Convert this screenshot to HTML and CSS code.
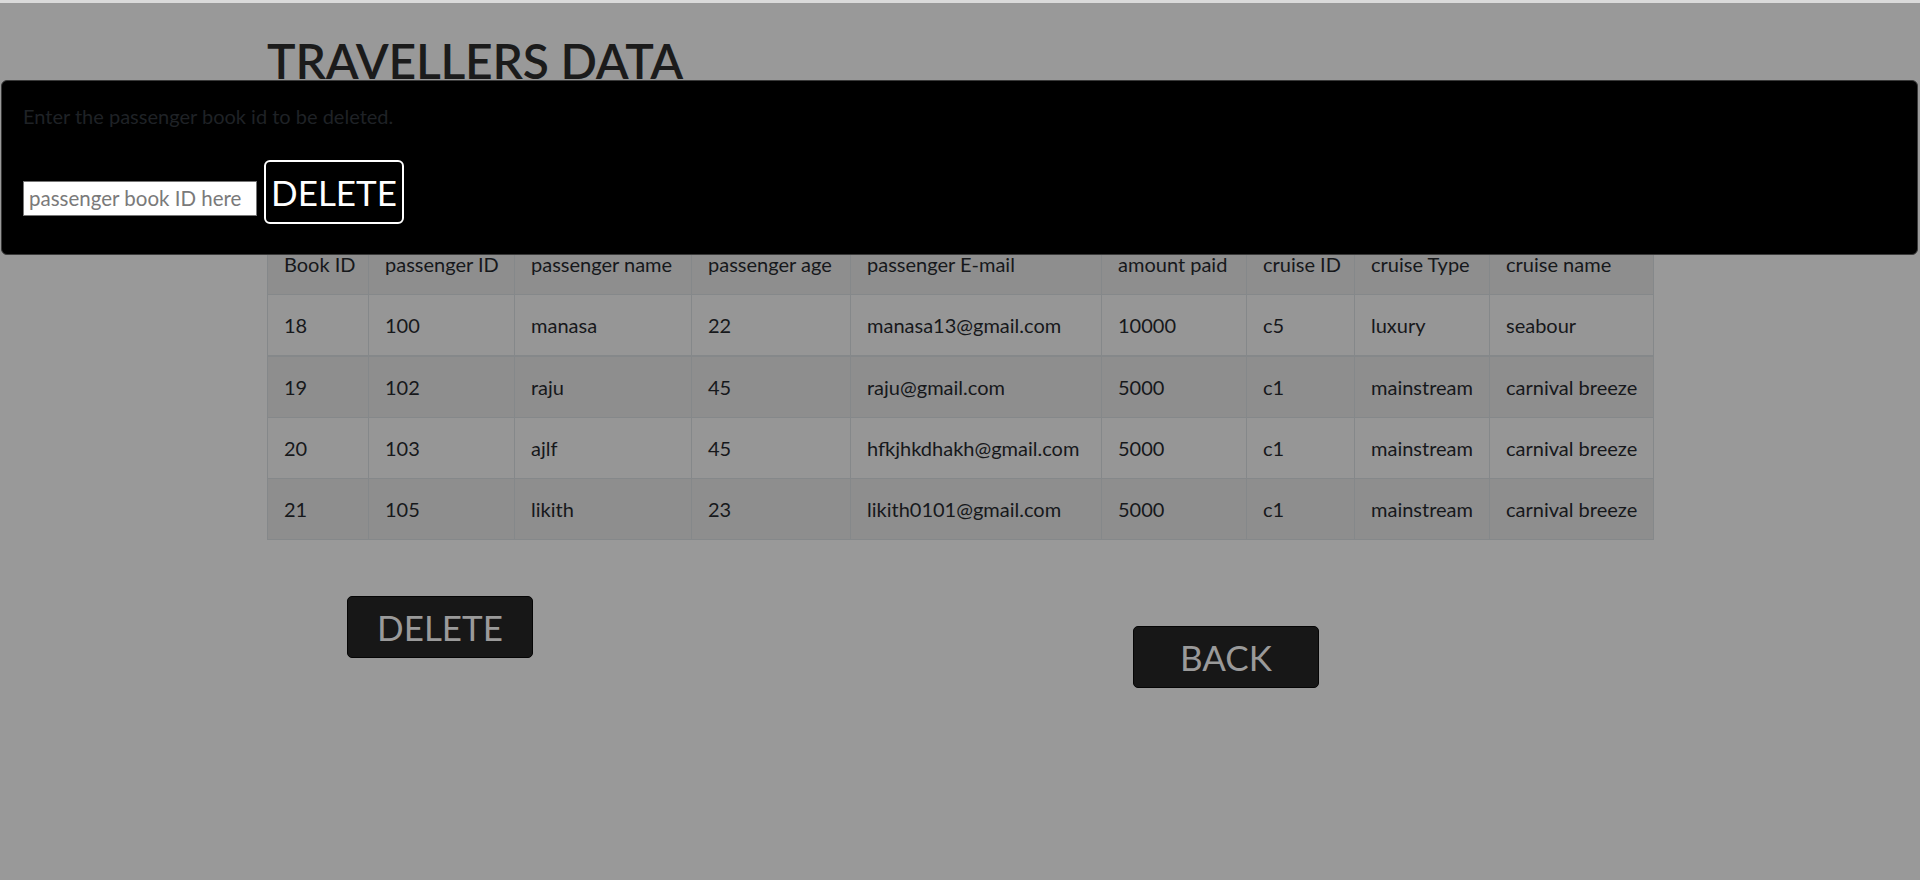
FILE: index.html
```html
<!DOCTYPE html>
<html>
<head>
<meta charset="utf-8">
<title>Travellers Data</title>
<link rel="stylesheet" href="styles.css">
</head>
<body>
<div class="topstrip"></div>
<main class="page">
  <h1 class="title">TRAVELLERS DATA</h1>
  <table class="data">
    <colgroup>
      <col class="c1"><col class="c2"><col class="c3"><col class="c4"><col class="c5"><col class="c6"><col class="c7"><col class="c8"><col class="c9">
    </colgroup>
    <tbody>
      <tr class="head"><td>Book ID</td><td>passenger ID</td><td>passenger name</td><td>passenger age</td><td>passenger E-mail</td><td>amount paid</td><td>cruise ID</td><td>cruise Type</td><td>cruise name</td></tr>
      <tr class="first"><td>18</td><td>100</td><td>manasa</td><td>22</td><td>manasa13@gmail.com</td><td>10000</td><td>c5</td><td>luxury</td><td>seabour</td></tr>
      <tr><td>19</td><td>102</td><td>raju</td><td>45</td><td>raju@gmail.com</td><td>5000</td><td>c1</td><td>mainstream</td><td>carnival breeze</td></tr>
      <tr><td>20</td><td>103</td><td>ajlf</td><td>45</td><td>hfkjhkdhakh@gmail.com</td><td>5000</td><td>c1</td><td>mainstream</td><td>carnival breeze</td></tr>
      <tr><td>21</td><td>105</td><td>likith</td><td>23</td><td>likith0101@gmail.com</td><td>5000</td><td>c1</td><td>mainstream</td><td>carnival breeze</td></tr>
    </tbody>
  </table>
  <div class="actions">
    <button class="btn-dark btn-delete">DELETE</button>
    <button class="btn-dark btn-back">BACK</button>
  </div>
</main>

<div class="modal">
  <p class="modal-text">Enter the passenger book id to be deleted.</p>
  <div class="modal-form">
    <input class="id-input" type="text" placeholder="passenger book ID here">
    <button class="btn-outline">DELETE</button>
  </div>
</div>
</body>
</html>
```
FILE: styles.css
```css
html, body {
  margin: 0;
  padding: 0;
}
body {
  background: #999999;
  font-family: Lato, "Liberation Sans", sans-serif;
  font-size: 20px;
  line-height: 1.5;
  color: #16181b;
  height: 880px;
  overflow: hidden;
}
.topstrip {
  height: 3px;
  background: #dadada;
}
.page {
  padding-left: 267px;
}
.title {
  margin: 29px 0 0 0;
  font-size: 48px;
  font-weight: 600;
  line-height: 1.2;
  color: #1b1b1b;
  letter-spacing: -0.2px;
  height: 201px;
}
.data {
  border-collapse: collapse;
  table-layout: fixed;
  width: 1386px;
  border: 1px solid #85888a;
}
.data td {
  padding: 15px 15px 15px 16px;
  border: 1px solid #85888a;
  line-height: 30px;
  white-space: nowrap;
  overflow: hidden;
}
.data tr { background: #969696; }
.data tr.head, .data tr:nth-child(3), .data tr:nth-child(5) { background: #8e8e8e; }
.data tr.first td { border-bottom-width: 2px; }
.c1 { width: 101px; }
.c2 { width: 146px; }
.c3 { width: 177px; }
.c4 { width: 159px; }
.c5 { width: 251px; }
.c6 { width: 145px; }
.c7 { width: 108px; }
.c8 { width: 135px; }
.c9 { width: 164px; }

.actions {
  display: flex;
  align-items: flex-start;
  margin-top: 56px;
}
.btn-dark {
  background: #171717;
  color: #9a9a9a;
  border: 1px solid #050505;
  border-radius: 5px;
  font-family: Lato, "Liberation Sans", sans-serif;
  font-size: 35px;
  width: 186px;
  height: 62px;
  padding: 0;
  line-height: 60px;
}
.btn-delete { margin-left: 80px; }
.btn-back { margin-left: 600px; margin-top: 30px; }

.modal {
  position: absolute;
  top: 80px;
  left: 1px;
  width: 1915px;
  height: 173px;
  background: #000;
  border: 1px solid #3a3a3a;
  border-radius: 6px;
  box-sizing: content-box;
}
.modal-text {
  margin: 20px 0 0 21px;
  color: #1f2226;
  font-size: 20px;
  line-height: 30px;
}
.modal-form {
  display: flex;
  align-items: baseline;
  margin: 29px 0 0 21px;
  gap: 7px;
}
.id-input {
  width: 234px;
  height: 35px;
  box-sizing: border-box;
  border: 1px solid #767676;
  background: #fff;
  padding: 0 5px;
  font-family: Lato, "Liberation Sans", sans-serif;
  font-size: 20.5px;
}
.id-input::placeholder { color: #7a7a7a; }
.btn-outline {
  background: #000;
  color: #fff;
  border: 2px solid #fff;
  border-radius: 6px;
  width: 140px;
  height: 64px;
  padding: 0;
  font-family: Lato, "Liberation Sans", sans-serif;
  font-size: 35px;
}
```
